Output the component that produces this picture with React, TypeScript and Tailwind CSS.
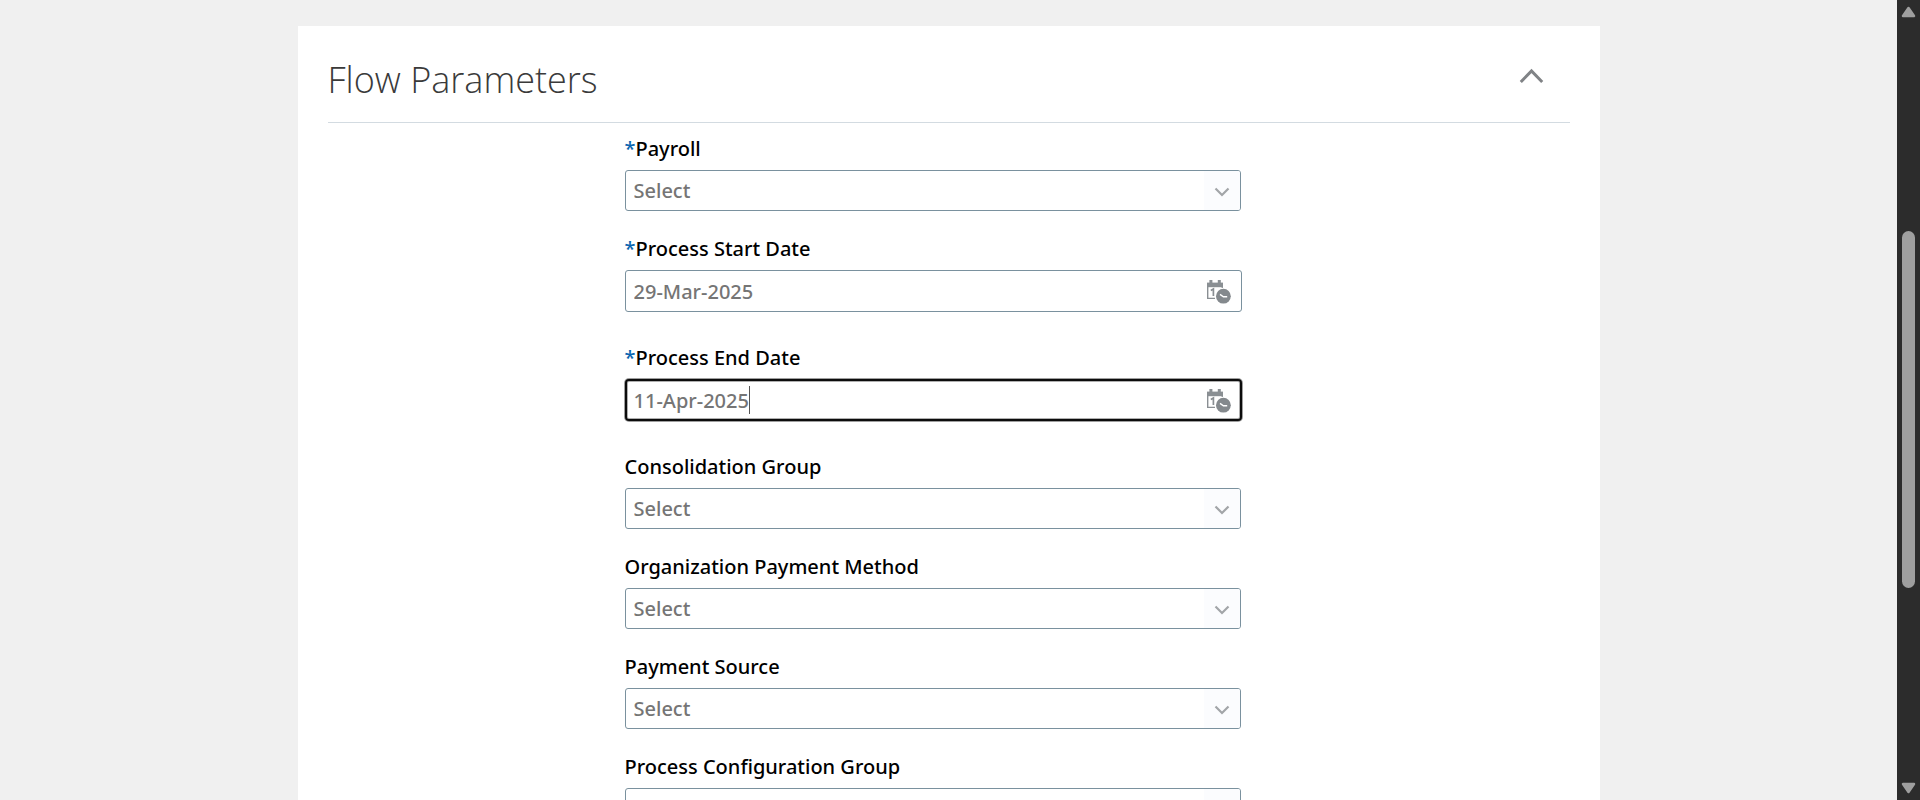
import React from "react";

type Field = {
  id: string;
  label: string;
  required?: boolean;
  kind: "select" | "date";
  value?: string;
  focused?: boolean;
};

const fields: Field[] = [
  { id: "payroll", label: "Payroll", required: true, kind: "select" },
  { id: "start-date", label: "Process Start Date", required: true, kind: "date", value: "29-Mar-2025" },
  { id: "end-date", label: "Process End Date", required: true, kind: "date", value: "11-Apr-2025", focused: true },
  { id: "consolidation-group", label: "Consolidation Group", kind: "select" },
  { id: "payment-method", label: "Organization Payment Method", kind: "select" },
  { id: "payment-source", label: "Payment Source", kind: "select" },
  { id: "configuration-group", label: "Process Configuration Group", kind: "select" },
];

function CalendarClockIcon() {
  return (
    <svg width="26" height="26" viewBox="0 0 26 26" aria-hidden="true">
      <path d="M1 3.6h16v4.6H1z" fill="#8a8f93" />
      <path d="M3.4 1h3v3.4h-3zM11.8 1h3v3.4h-3z" fill="#8a8f93" />
      <path d="M1.7 8v11.4H9M16.3 8v2" fill="none" stroke="#8a8f93" strokeWidth="1.4" />
      <path d="M4.8 11.4L7.4 10v7" fill="none" stroke="#8a8f93" strokeWidth="1.7" />
      <circle cx="17.4" cy="17.2" r="8.5" fill="#fff" />
      <circle cx="17.4" cy="17.2" r="7.4" fill="#84898d" />
      <path d="M14 15.4l3.4 2.4h3.8" fill="none" stroke="#fff" strokeWidth="1.4" />
    </svg>
  );
}

function SelectBox({ id }: { id: string }) {
  return (
    <div className="grid h-[41px] overflow-hidden rounded-[3px] border border-[#7a919e] bg-white">
      <span className="pointer-events-none col-start-1 row-start-1 flex w-9 items-center justify-center justify-self-end bg-[#fbfcfe] pt-0.5">
        <svg width="16" height="10" viewBox="0 0 16 10" fill="none" aria-hidden="true">
          <path d="M1.5 1.5L8 8l6.5-6.5" stroke="#a2a5a8" strokeWidth="2.2" />
        </svg>
      </span>
      <select
        id={id}
        className="col-start-1 row-start-1 w-full appearance-none bg-transparent px-2 text-[20px] leading-7 font-medium text-[#757575] outline-none"
      >
        <option>Select</option>
      </select>
    </div>
  );
}

function DateBox({ id, value, focused }: { id: string; value?: string; focused?: boolean }) {
  return (
    <div
      className={
        focused
          ? "relative -mr-px flex h-[42px] items-center rounded-[4px] border-2 border-[#0c0c0c] bg-white px-[7px] pt-0.5 shadow-[0_0_0_1px_#00000060,inset_0_0_0_1px_#00000050]"
          : "relative -mr-px flex h-[42px] items-center rounded-[3px] border border-[#7a919e] bg-white px-2 pt-0.5"
      }
    >
      <input
        id={id}
        type="text"
        defaultValue={value}
        className="min-w-0 flex-1 bg-transparent text-[20px] leading-7 font-medium text-[#757575] caret-transparent outline-none"
      />
      {focused && <span className="absolute top-[5px] left-[122px] h-7 w-px bg-[#555]" />}
      <button type="button" aria-label="Select date" className="mr-px shrink-0">
        <CalendarClockIcon />
      </button>
    </div>
  );
}

function FormField({ field }: { field: Field }) {
  return (
    <div className={field.kind === "date" ? "mb-[33px]" : "mb-[25px]"}>
      <label htmlFor={field.id} className="mb-2 block text-[20px] leading-[26px] font-medium text-black">
        {field.required && <span className="text-[#0a66b0]">*</span>}
        {field.label}
      </label>
      {field.kind === "date" ? (
        <DateBox id={field.id} value={field.value} focused={field.focused} />
      ) : (
        <SelectBox id={field.id} />
      )}
    </div>
  );
}

function ScrollRail() {
  return (
    <div aria-hidden="true" className="flex w-[23px] shrink-0 flex-col items-center bg-[#2c2c2c] py-1.5">
      <svg width="15" height="12" viewBox="0 0 15 12">
        <path d="M7.5 2L13 10H2z" fill="#9f9f9f" stroke="#9f9f9f" strokeWidth="2.5" strokeLinejoin="round" />
      </svg>
      <div className="flex w-[13px] flex-1 flex-col">
        <div className="flex-[213]" />
        <div className="flex-[357] rounded-full bg-[#9f9f9f]" />
        <div className="flex-[194]" />
      </div>
      <svg width="15" height="12" viewBox="0 0 15 12">
        <path d="M7.5 10L2 2h11z" fill="#9f9f9f" stroke="#9f9f9f" strokeWidth="2.5" strokeLinejoin="round" />
      </svg>
    </div>
  );
}

export default function App() {
  return (
    <div className="flex h-screen overflow-hidden bg-[#f0f0f0] font-['Segoe_UI','Noto_Sans','Open_Sans',sans-serif]">
      <main className="min-w-0 flex-1 overflow-y-auto px-4 pt-[26px] [scrollbar-width:none]">
        <section className="mx-auto max-w-[1302px] bg-white px-[30px] pt-7">
          <header className="flex items-center justify-between border-b border-[#d3dbe1] pr-[26px] pb-4">
            <h1 className="font-['Segoe_UI','Open_Sans',sans-serif] text-[36px] leading-[52px] font-light text-[#3a3a3a]">
              Flow Parameters
            </h1>
            <button type="button" aria-label="Collapse Flow Parameters" className="mb-2">
              <svg width="25" height="16" viewBox="0 0 25 16" fill="none" aria-hidden="true">
                <path d="M1.8 14L12.5 3l10.7 11" stroke="#808386" strokeWidth="3" />
              </svg>
            </button>
          </header>
          <div className="flex justify-center pr-8">
            <form className="w-full max-w-[616px] pt-[13px]">
              {fields.map((field) => (
                <FormField key={field.id} field={field} />
              ))}
            </form>
          </div>
        </section>
      </main>
      <ScrollRail />
    </div>
  );
}
